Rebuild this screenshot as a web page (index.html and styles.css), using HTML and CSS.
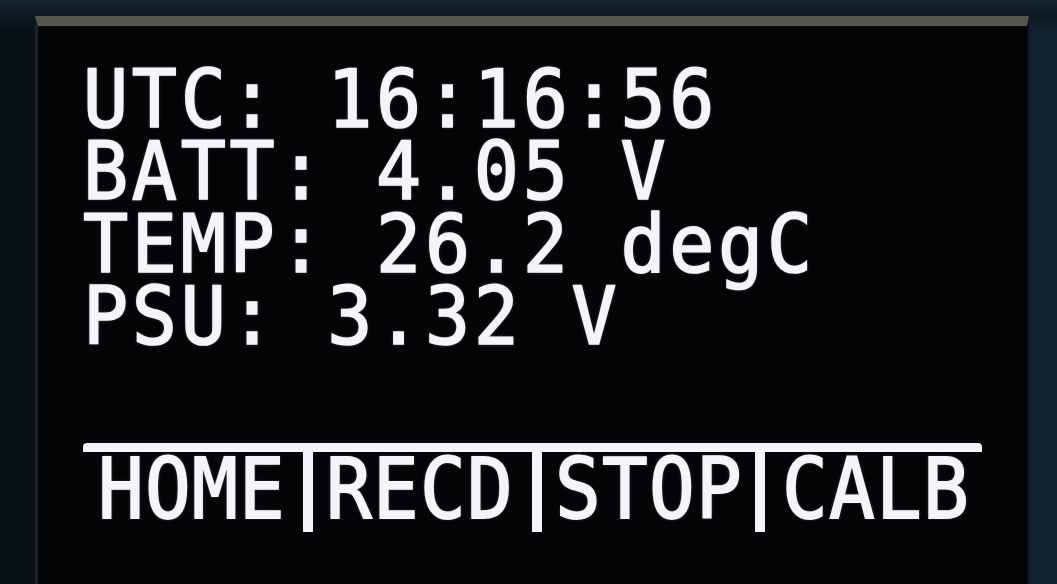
FILE: index.html
```html
<!DOCTYPE html>
<html>
<head>
<meta charset="utf-8">
<link rel="stylesheet" href="styles.css">
</head>
<body>
<div class="bezel">
  <div class="screen">
    <div class="readout">
      <div class="line">UTC: 16:16:56</div>
      <div class="line">BATT: 4.05 V</div>
      <div class="line">TEMP: 26.2 degC</div>
      <div class="line">PSU: 3.32 V</div>
    </div>
    <div class="menu">
      <div class="item item-home"><span class="label">HOME</span></div>
      <div class="item item-recd"><span class="label">RECD</span></div>
      <div class="item item-stop"><span class="label">STOP</span></div>
      <div class="item item-calb"><span class="label">CALB</span></div>
    </div>
  </div>
</div>
</body>
</html>
```

FILE: styles.css
```css
html, body {
  margin: 0;
  padding: 0;
}
body {
  width: 1057px;
  height: 584px;
  overflow: hidden;
  background: linear-gradient(90deg, #0a1114 0%, #0c171c 60%, #10232f 100%);
}
.bezel {
  height: 584px;
  padding-top: 16px;
  box-sizing: border-box;
  background: linear-gradient(180deg, #142630 0px, #0d1a20 16px, transparent 30px);
}
.screen {
  margin-left: 35px;
  width: 994px;
  height: 568px;
  box-sizing: border-box;
  border-top: 10px solid #56574a;
  border-left: 3px solid #1b2124;
  border-right: 2px solid #0a1418;
  background: #040506;
  padding-top: 39px;
  padding-left: 45px;
  font-family: "DejaVu Sans Mono", "Liberation Mono", monospace;
  font-weight: normal;
  color: #f3f5fa;
  -webkit-text-stroke: 1.6px #f3f5fa;
  text-shadow: 0 0 3px rgba(220, 232, 255, 0.5);
}
.readout {
  display: flex;
  flex-direction: column;
}
.line {
  font-size: 75px;
  letter-spacing: 3.7px;
  line-height: 72.3px;
  height: 72.3px;
  white-space: pre;
  transform: scaleY(1.08);
  transform-origin: 0 62px;
}
.menu {
  margin-top: 89px;
  width: 899px;
  border-top: 9px solid #f3f5fa;
  border-radius: 4px 4px 0 0;
  display: flex;
}
.item {
  height: 80px;
  box-sizing: border-box;
  font-size: 76px;
  letter-spacing: 1.25px;
  line-height: 76px;
  padding-top: 2px;
  padding-bottom: 2px;
  padding-left: 15px;
  white-space: pre;
}
.label {
  display: inline-block;
  transform: scaleY(1.1);
  transform-origin: 0 64px;
}
.item-home {
  width: 220px;
}
.item-recd,
.item-stop,
.item-calb {
  border-left: 10px solid #f3f5fa;
}
.item-recd {
  width: 229px;
  padding-left: 13px;
}
.item-stop {
  width: 223px;
  padding-left: 13px;
}
.item-calb {
  flex: 1;
  padding-left: 17px;
}
```
